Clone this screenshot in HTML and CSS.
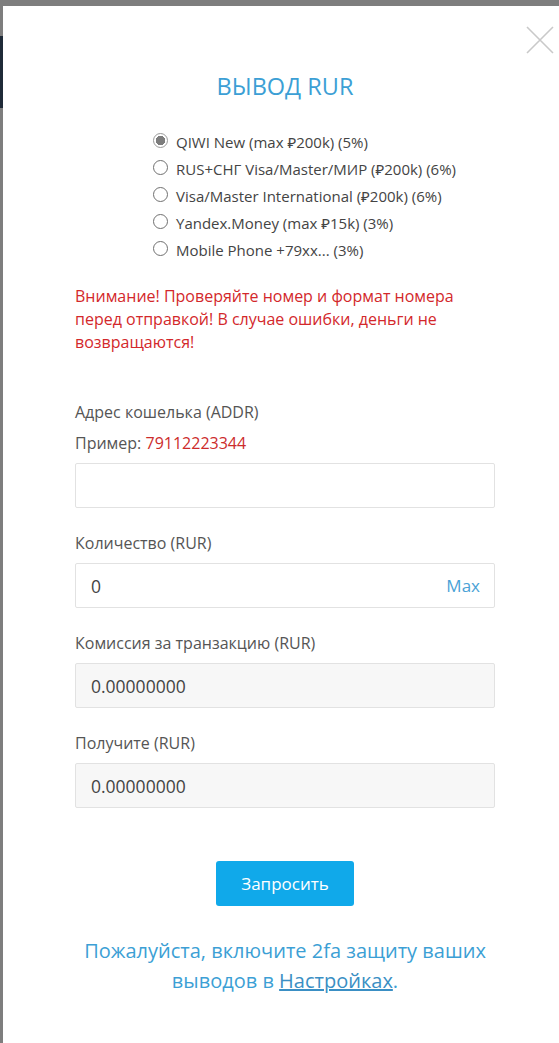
FILE: index.html
```html
<!DOCTYPE html>
<html lang="ru">
<head>
<meta charset="utf-8">
<title>Вывод RUR</title>
<link rel="stylesheet" href="styles.css">
</head>
<body>
<div class="backdrop-mark"></div>
<div class="modal">
  <button class="close" aria-label="Закрыть">
    <svg width="28" height="28" viewBox="0 0 28 28"><path d="M1 1 L27 27 M27 1 L1 27" stroke="#c9c9c9" stroke-width="1.6" fill="none"/></svg>
  </button>
  <h1 class="title">ВЫВОД RUR</h1>
  <ul class="methods">
    <li class="method checked"><span class="radio"></span>QIWI New (max ₽200k) (5%)</li>
    <li class="method"><span class="radio"></span>RUS+СНГ Visa/Master/МИР (₽200k) (6%)</li>
    <li class="method"><span class="radio"></span>Visa/Master International (₽200k) (6%)</li>
    <li class="method"><span class="radio"></span>Yandex.Money (max ₽15k) (3%)</li>
    <li class="method"><span class="radio"></span>Mobile Phone +79xx... (3%)</li>
  </ul>
  <p class="warning">Внимание! Проверяйте номер и формат номера перед отправкой! В случае ошибки, деньги не возвращаются!</p>
  <div class="field">
    <div class="label">Адрес кошелька (ADDR)</div>
    <div class="label example">Пример: <span class="red">79112223344</span></div>
    <div class="input"></div>
  </div>
  <div class="field">
    <div class="label">Количество (RUR)</div>
    <div class="input"><span class="value">0</span><span class="max">Max</span></div>
  </div>
  <div class="field">
    <div class="label">Комиссия за транзакцию (RUR)</div>
    <div class="input disabled"><span class="value">0.00000000</span></div>
  </div>
  <div class="field">
    <div class="label">Получите (RUR)</div>
    <div class="input disabled"><span class="value">0.00000000</span></div>
  </div>
  <div class="actions"><button class="submit">Запросить</button></div>
  <p class="note">Пожалуйста, включите 2fa защиту ваших выводов в&nbsp;<a href="#">Настройках</a>.</p>
</div>
</body>
</html>
```
FILE: styles.css
```css
html, body {
  margin: 0;
  padding: 0;
}
body {
  background: #7e7e7e;
  font-family: "Open Sans", "Noto Sans", "Liberation Sans", sans-serif;
  color: #555;
  height: 1043px;
  overflow: hidden;
}
.backdrop-mark {
  position: absolute;
  left: 0;
  top: 36px;
  width: 3px;
  height: 72px;
  background: #1f2a38;
}
.modal {
  position: relative;
  margin: 6px 0 0 3px;
  background: #fff;
  height: 1037px;
  padding: 65px 64px 0 72px;
  box-sizing: border-box;
}
.close {
  position: absolute;
  top: 20px;
  right: 5px;
  background: none;
  border: 0;
  padding: 0;
  width: 28px;
  height: 28px;
  cursor: pointer;
}
.close svg { display: block; }
.title {
  margin: 0;
  text-align: center;
  font-weight: 400;
  font-size: 23.5px;
  line-height: 30px;
  color: #3c9fd5;
}
.methods {
  list-style: none;
  margin: 27px 0 0 78px;
  padding: 0;
}
.method {
  display: flex;
  align-items: center;
  height: 27px;
  font-size: 15px;
  color: #444;
  white-space: nowrap;
}
.radio {
  flex: none;
  width: 13px;
  height: 13px;
  border: 1px solid #707070;
  border-radius: 50%;
  margin-right: 8px;
  box-sizing: content-box;
  position: relative;
  top: -1px;
}
.method.checked .radio {
  border-color: #9a9a9a;
  background: radial-gradient(circle, #7d7d7d 0 4.5px, #fff 5px);
}
.warning {
  margin: 22px 0 0;
  font-size: 16px;
  line-height: 23px;
  color: #d3282b;
}
.field { margin-top: 24px; }
.field:first-of-type { margin-top: 47px; }
.label {
  font-size: 16px;
  line-height: 22px;
  color: #555;
  margin-bottom: 9px;
}
.red { color: #cc2b2b; }
.input {
  height: 45px;
  box-sizing: border-box;
  border: 1px solid #e2e2e2;
  border-radius: 2px;
  background: #fff;
  display: flex;
  align-items: center;
  justify-content: space-between;
  padding: 0 14px 0 15px;
  font-size: 17.5px;
  color: #444;
}
.input.disabled { background: #f7f7f7; }
.max { color: #4aa2d6; font-size: 17px; }
.actions {
  display: flex;
  justify-content: center;
  margin-top: 53px;
}
.submit {
  width: 138px;
  height: 45px;
  border: 0;
  border-radius: 3px;
  background: #10a9ea;
  color: #fff;
  font-family: inherit;
  font-size: 17px;
}
.note {
  margin: 30px 0 0;
  text-align: center;
  font-size: 20px;
  line-height: 29.5px;
  color: #3c9fd5;
}
.note a { color: #3a8fc4; text-decoration: underline; }
```
